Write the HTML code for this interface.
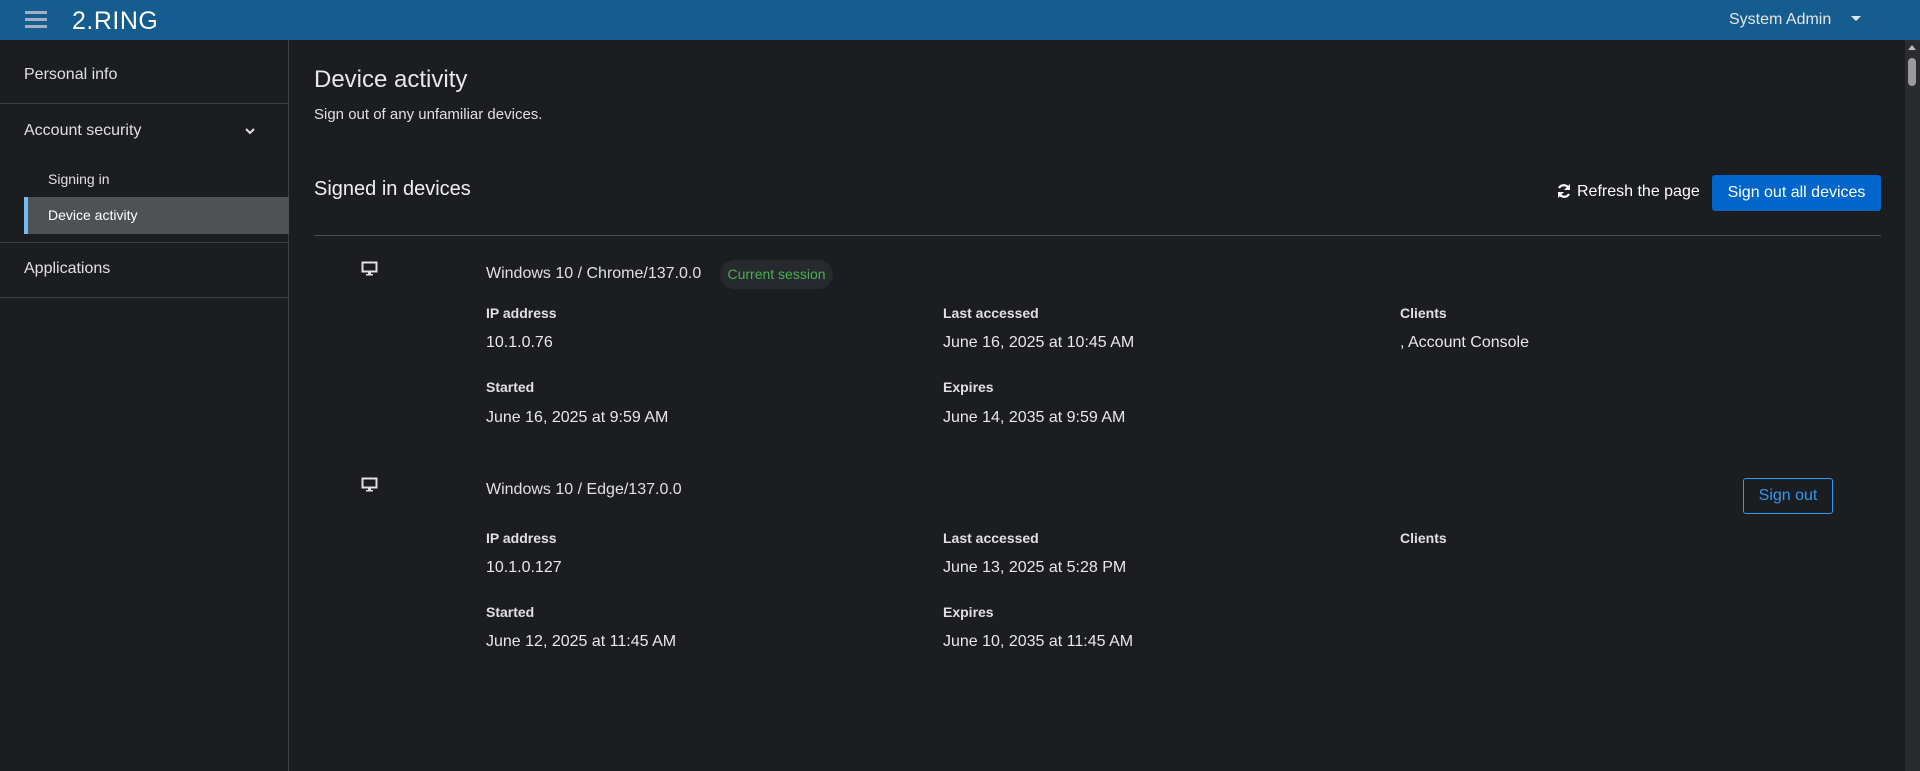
<!DOCTYPE html>
<html><head><style>
*{box-sizing:border-box;margin:0;padding:0}
body{width:1920px;height:771px;overflow:hidden;background:#1b1d21;font-family:"Liberation Sans",sans-serif;color:#e0e0e0;position:relative}
.a{position:absolute;white-space:nowrap}
.hdr{position:absolute;left:0;top:0;width:1920px;height:40px;background:#155c8f}
.side{position:absolute;left:0;top:40px;width:289px;height:731px;border-right:1px solid #3c3f42}
.hr{position:absolute;left:0;width:289px;height:1px;background:#3c3f42}
.lbl{font-size:14px;font-weight:bold;color:#e0e0e0}
.val{font-size:16px;color:#e8e8e8}
</style></head><body>
<div class="hdr">
 <div class="a" style="left:25px;top:11px;width:22px;height:3px;background:#9fb1c2;box-shadow:0 7px 0 #9fb1c2,0 14px 0 #9fb1c2"></div>
 <div class="a" style="left:72px;top:7px;font-size:25px;font-weight:normal;color:#fff;letter-spacing:0.5px;line-height:28px">2.RING</div>
 <div class="a" style="left:1729px;top:11px;font-size:16px;color:#e6e6e6">System Admin</div>
 <div class="a" style="left:1851px;top:16px;width:0;height:0;border-left:5px solid transparent;border-right:5px solid transparent;border-top:5px solid #e6e6e6"></div>
</div>
<div class="side">
 <div class="a" style="left:24px;top:26px;font-size:16px">Personal info</div>
 <div class="hr" style="top:63px"></div>
 <div class="a" style="left:24px;top:82px;font-size:16px">Account security</div>
 <svg class="a" style="left:244px;top:86px" width="12" height="10" viewBox="0 0 12 10"><path d="M2 3l4 4 4-4" stroke="#e0e0e0" stroke-width="2" fill="none"/></svg>
 <div class="a" style="left:48px;top:131px;font-size:14px">Signing in</div>
 <div class="a" style="left:24px;top:157px;width:265px;height:37px;background:#4f5255;border-left:4px solid #73bcf7"></div>
 <div class="a" style="left:48px;top:167px;font-size:14px;color:#fff">Device activity</div>
 <div class="hr" style="top:202px"></div>
 <div class="a" style="left:24px;top:220px;font-size:16px">Applications</div>
 <div class="hr" style="top:257px"></div>
</div>
<div class="a" style="left:314px;top:66px;font-size:24px;color:#e8e8e8">Device activity</div>
<div class="a" style="left:314px;top:106px;font-size:15px">Sign out of any unfamiliar devices.</div>
<div class="a" style="left:314px;top:178px;font-size:20px;color:#f0f0f0">Signed in devices</div>
<svg class="a" style="left:1556px;top:183px" width="16" height="16" viewBox="0 0 16 16"><path d="M13 6A5.5 5.5 0 0 0 3 5M3 10a5.5 5.5 0 0 0 10 1" stroke="#fff" stroke-width="2.2" fill="none"/><path d="M14 1v6H8z M2 15V9h6z" fill="#fff"/></svg>
<div class="a" style="left:1577px;top:183px;font-size:16px;color:#fff">Refresh the page</div>
<div class="a" style="left:1712px;top:175px;width:169px;height:36px;background:#0066cc;border-radius:3px;color:#fff;font-size:16px;text-align:center;line-height:36px">Sign out all devices</div>
<div class="a" style="left:314px;top:235px;width:1567px;height:1px;background:#4a4d52"></div>

<svg class="a" style="left:361px;top:261px" width="18" height="16" viewBox="0 0 18 16"><rect x="1.5" y="1.5" width="14" height="9" fill="none" stroke="#e0e0e0" stroke-width="2"/><rect x="7" y="11" width="3" height="2" fill="#e0e0e0"/><rect x="5" y="13" width="7" height="1.5" fill="#e0e0e0"/></svg>
<div class="a" style="left:486px;top:265px;font-size:16px">Windows 10 / Chrome/137.0.0</div>
<div class="a" style="left:720px;top:260px;width:113px;height:29px;border-radius:15px;background:#26292d;color:#4caf50;font-size:14px;line-height:29px;text-align:center">Current session</div>
<div class="a lbl" style="left:486px;top:305px">IP address</div>
<div class="a val" style="left:486px;top:334px">10.1.0.76</div>
<div class="a lbl" style="left:943px;top:305px">Last accessed</div>
<div class="a val" style="left:943px;top:334px">June 16, 2025 at 10:45 AM</div>
<div class="a lbl" style="left:1400px;top:305px">Clients</div>
<div class="a val" style="left:1400px;top:334px">, Account Console</div>
<div class="a lbl" style="left:486px;top:379px">Started</div>
<div class="a val" style="left:486px;top:409px">June 16, 2025 at 9:59 AM</div>
<div class="a lbl" style="left:943px;top:379px">Expires</div>
<div class="a val" style="left:943px;top:409px">June 14, 2035 at 9:59 AM</div>

<svg class="a" style="left:361px;top:477px" width="18" height="16" viewBox="0 0 18 16"><rect x="1.5" y="1.5" width="14" height="9" fill="none" stroke="#e0e0e0" stroke-width="2"/><rect x="7" y="11" width="3" height="2" fill="#e0e0e0"/><rect x="5" y="13" width="7" height="1.5" fill="#e0e0e0"/></svg>
<div class="a" style="left:486px;top:481px;font-size:16px">Windows 10 / Edge/137.0.0</div>
<div class="a" style="left:1743px;top:478px;width:90px;height:36px;border:1px solid #2b9af3;border-radius:3px;color:#2b9af3;font-size:16px;text-align:center;line-height:34px">Sign out</div>
<div class="a lbl" style="left:486px;top:530px">IP address</div>
<div class="a val" style="left:486px;top:559px">10.1.0.127</div>
<div class="a lbl" style="left:943px;top:530px">Last accessed</div>
<div class="a val" style="left:943px;top:559px">June 13, 2025 at 5:28 PM</div>
<div class="a lbl" style="left:1400px;top:530px">Clients</div>
<div class="a lbl" style="left:486px;top:604px">Started</div>
<div class="a val" style="left:486px;top:633px">June 12, 2025 at 11:45 AM</div>
<div class="a lbl" style="left:943px;top:604px">Expires</div>
<div class="a val" style="left:943px;top:633px">June 10, 2035 at 11:45 AM</div>

<div class="a" style="left:1905px;top:40px;width:15px;height:731px;background:#2a2b2e"></div>
<div class="a" style="left:1908px;top:45px;width:0;height:0;border-left:4px solid transparent;border-right:4px solid transparent;border-bottom:5px solid #bbb"></div>
<div class="a" style="left:1908px;top:58px;width:8px;height:28px;border-radius:4px;background:#9a9a9a"></div>
</body></html>
